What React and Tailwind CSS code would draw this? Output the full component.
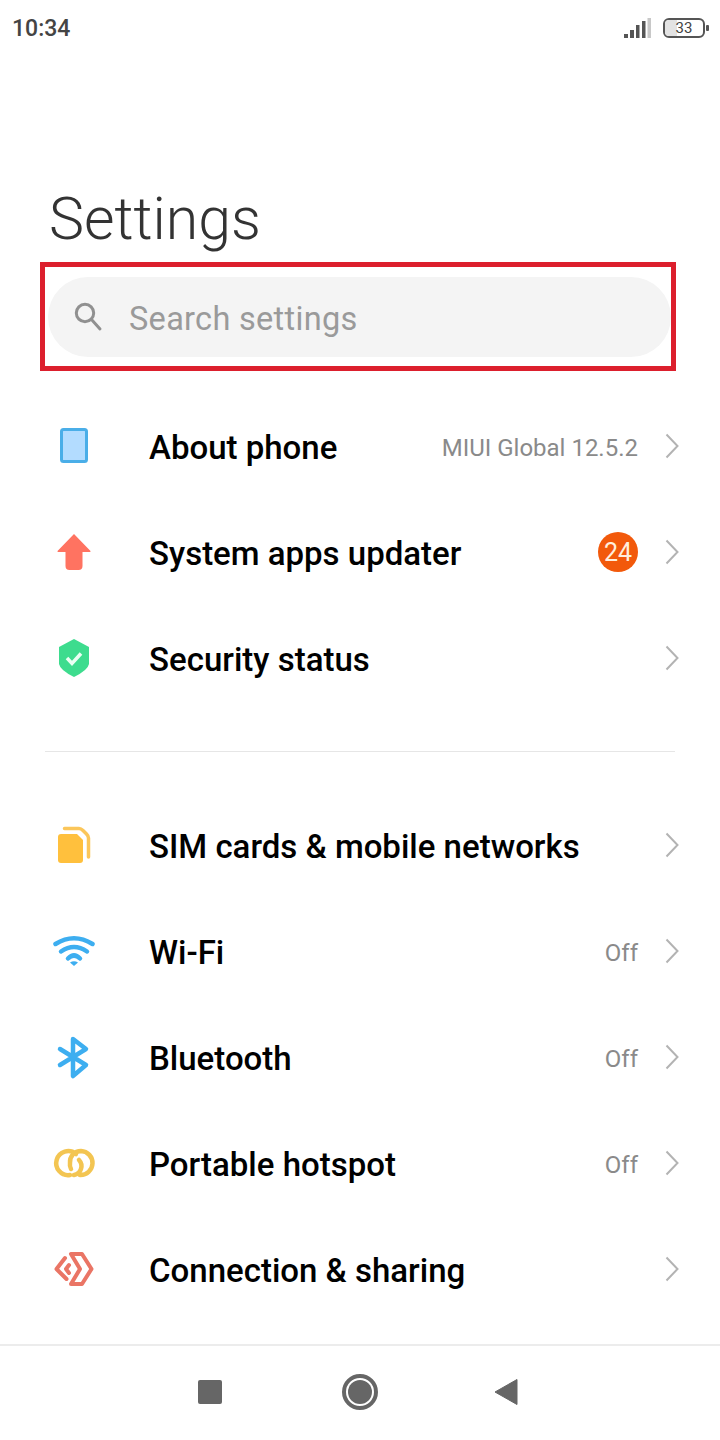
const Chevron = () => (
  <svg width="14" height="26" viewBox="0 0 14 26" fill="none" className="ml-[27px] -translate-y-px shrink-0">
    <path d="M1.5 1.5 L12.5 13 L1.5 24.5" stroke="#b3b3b3" strokeWidth="2" />
  </svg>
);

const icons = {
  phone: (
    <svg width="44" height="44" viewBox="0 0 44 44">
      <rect x="9.5" y="4.5" width="25" height="32" rx="2" fill="#b3dcff" stroke="#4aaee8" strokeWidth="3" />
    </svg>
  ),
  arrow: (
    <svg width="44" height="44" viewBox="0 0 44 44">
      <path d="M22 3 L38.5 20 Q39 21 37.5 21 L30.5 21 L30.5 35 Q30.5 39 26.5 39 L17.5 39 Q13.5 39 13.5 35 L13.5 21 L6.5 21 Q5 21 5.5 20 Z" fill="#ff7361" />
    </svg>
  ),
  shield: (
    <svg width="44" height="44" viewBox="0 0 44 44">
      <path d="M22 2 L37 10 L37 27 Q36 33 22 40 Q8 33 7 27 L7 10 Z" fill="#3ddc8e" />
      <path d="M15 21 L20 26.5 L29 16.5" fill="none" stroke="#eafff3" strokeWidth="3.5" />
    </svg>
  ),
  sim: (
    <svg width="44" height="44" viewBox="0 0 44 44">
      <path d="M9 10 L25 10 L31 16 L31 36 Q31 39 28 39 L9 39 Q6 39 6 36 L6 13 Q6 10 9 10 Z" fill="#ffc03d" />
      <path d="M12.5 4.5 L27 4.5 Q29 4.5 31 6.5 L34.5 10 Q36.5 12 36.5 14 L36.5 33" fill="none" stroke="#fbc65a" strokeWidth="3.5" strokeLinecap="round" />
    </svg>
  ),
  wifi: (
    <svg width="44" height="44" viewBox="0 0 44 44">
      <g fill="none" stroke="#3daef0" strokeWidth="4.5" strokeLinecap="round">
        <path d="M3.5 14 Q22 2.5 40.5 14" />
        <path d="M9 21.5 Q22 12.5 35 21.5" />
        <path d="M16 28.5 Q22 22.5 28 28.5" />
      </g>
      <path d="M22 36 L18 32.5 Q22 30 26 32.5 Z" fill="#3daef0" />
    </svg>
  ),
  bluetooth: (
    <svg width="44" height="44" viewBox="0 0 44 44">
      <path d="M8 13 L34 29 L21 40 L21 3 L34 13 L8 29" fill="none" stroke="#3daef0" strokeWidth="4.5" strokeLinecap="round" strokeLinejoin="round" />
    </svg>
  ),
  hotspot: (
    <svg width="44" height="44" viewBox="0 0 44 44">
      <g fill="none" stroke="#f3c552" strokeWidth="4.5" strokeLinecap="round" transform="translate(1 0)">
        <path d="M17 33 A12 12 0 1 1 23 12" />
        <path d="M18 27 A9 9 0 0 1 17 21 A11 11 0 0 1 28 9 A12 12 0 1 1 27 33" />
        <path d="M26 18 A9 9 0 0 1 21 33" />
      </g>
    </svg>
  ),
  connect: (
    <svg width="44" height="44" viewBox="0 0 44 44">
      <g fill="none" stroke="#ea7565" strokeWidth="4" strokeLinejoin="round" strokeLinecap="round">
        <path d="M19 6 L30 6 L39.5 21 L30 36 L19 36 L28 21 Z" />
        <path d="M13 10 L4.5 21 L14.5 31" />
        <path d="M17 17 L14 21 L17 25" />
      </g>
    </svg>
  ),
};

const Row = ({ icon, label, value, badge }) => (
  <div className="flex h-[106px] items-center pl-[52px] pr-[41px]">
    <div className="flex w-[44px] h-[44px] items-center justify-center shrink-0">{icons[icon]}</div>
    <div className="ml-[53px] flex-1 text-[33px] font-medium text-black leading-none">{label}</div>
    {value && <div className="translate-y-px text-[24px] text-[#8a8a8a] leading-none">{value}</div>}
    {badge && (
      <div className="flex h-[40px] w-[40px] -translate-y-px items-center justify-center rounded-full bg-[#f2590b] text-[25px] text-[#ffeedd] leading-none">
        {badge}
      </div>
    )}
    <Chevron />
  </div>
);

export default function App() {
  return (
    <div className="flex h-[1440px] w-[720px] flex-col overflow-hidden bg-white font-['Roboto',sans-serif]">
      <div className="flex h-[56px] items-center justify-between pl-[12px] pr-[11px]">
        <span className="text-[23px] font-medium text-[#444444] leading-none">10:34</span>
        <div className="flex items-center gap-[12px]">
          <svg width="27" height="20" viewBox="0 0 27 20">
            <rect x="0" y="16" width="4" height="4" fill="#555" />
            <rect x="6" y="12" width="4" height="8" fill="#555" />
            <rect x="12" y="7" width="3.5" height="13" fill="#555" />
            <rect x="18" y="3" width="3.5" height="17" fill="#555" />
            <rect x="23.5" y="0" width="3.5" height="20" fill="#c8c8c8" />
          </svg>
          <div className="flex items-center gap-[1px]">
            <div className="relative flex h-[20px] w-[42px] items-center justify-center overflow-hidden rounded-[6px] border-[2px] border-[#555555] text-[15px] leading-none text-[#444444]">
              <div className="absolute inset-y-0 left-0 w-[12px] bg-[#e3e3e3]" />
              <span className="relative">33</span>
            </div>
            <div className="h-[6px] w-[3px] rounded-[1px] bg-[#555555]" />
          </div>
        </div>
      </div>

      <div className="mt-[133px] h-[73px] pl-[49px] text-[59px] font-light leading-[60px] text-[#333333]">Settings</div>

      <div className="ml-[40px] flex h-[109px] w-[636px] items-center border-[5px] border-[#dc1f2d] pl-[3px]">
        <div className="flex h-[80px] w-[623px] shrink-0 items-center rounded-[40px] bg-[#f4f4f4] pl-[25px]">
          <svg width="30" height="30" viewBox="0 0 30 30" fill="none" stroke="#909090" strokeWidth="3">
            <circle cx="12" cy="11" r="8.7" />
            <path d="M18.5 17.5 L27 27" strokeLinecap="round" />
          </svg>
          <span className="ml-[26px] translate-y-[3px] text-[32.5px] leading-none tracking-[0.3px] text-[#9a9a9a]">Search settings</span>
        </div>
      </div>

      <div className="mt-[23px]">
        <Row icon="phone" label="About phone" value="MIUI Global 12.5.2" />
        <Row icon="arrow" label="System apps updater" badge="24" />
        <Row icon="shield" label="Security status" />
      </div>

      <div className="mx-[45px] mt-[39px] h-px bg-[#e6e6e6]" />

      <div className="mt-[41px]">
        <Row icon="sim" label="SIM cards & mobile networks" />
        <Row icon="wifi" label="Wi-Fi" value="Off" />
        <Row icon="bluetooth" label="Bluetooth" value="Off" />
        <Row icon="hotspot" label="Portable hotspot" value="Off" />
        <Row icon="connect" label="Connection & sharing" />
      </div>

      <div className="mt-[21px] flex h-[96px] items-center border-t-[2px] border-[#ececec] pb-[2px] pl-[198px]">
        <div className="h-[24px] w-[24px] rounded-[2px] bg-[#666666]" />
        <div className="ml-[120px] flex h-[36px] w-[36px] items-center justify-center rounded-full border-[4px] border-[#666666]">
          <div className="h-[24px] w-[24px] rounded-full bg-[#666666]" />
        </div>
        <svg width="24" height="28" viewBox="0 0 24 28" className="ml-[116px]">
          <path d="M23 1.5 L23 26.5 L1 14 Z" fill="#666666" stroke="#666666" strokeLinejoin="round" />
        </svg>
      </div>
    </div>
  );
}
